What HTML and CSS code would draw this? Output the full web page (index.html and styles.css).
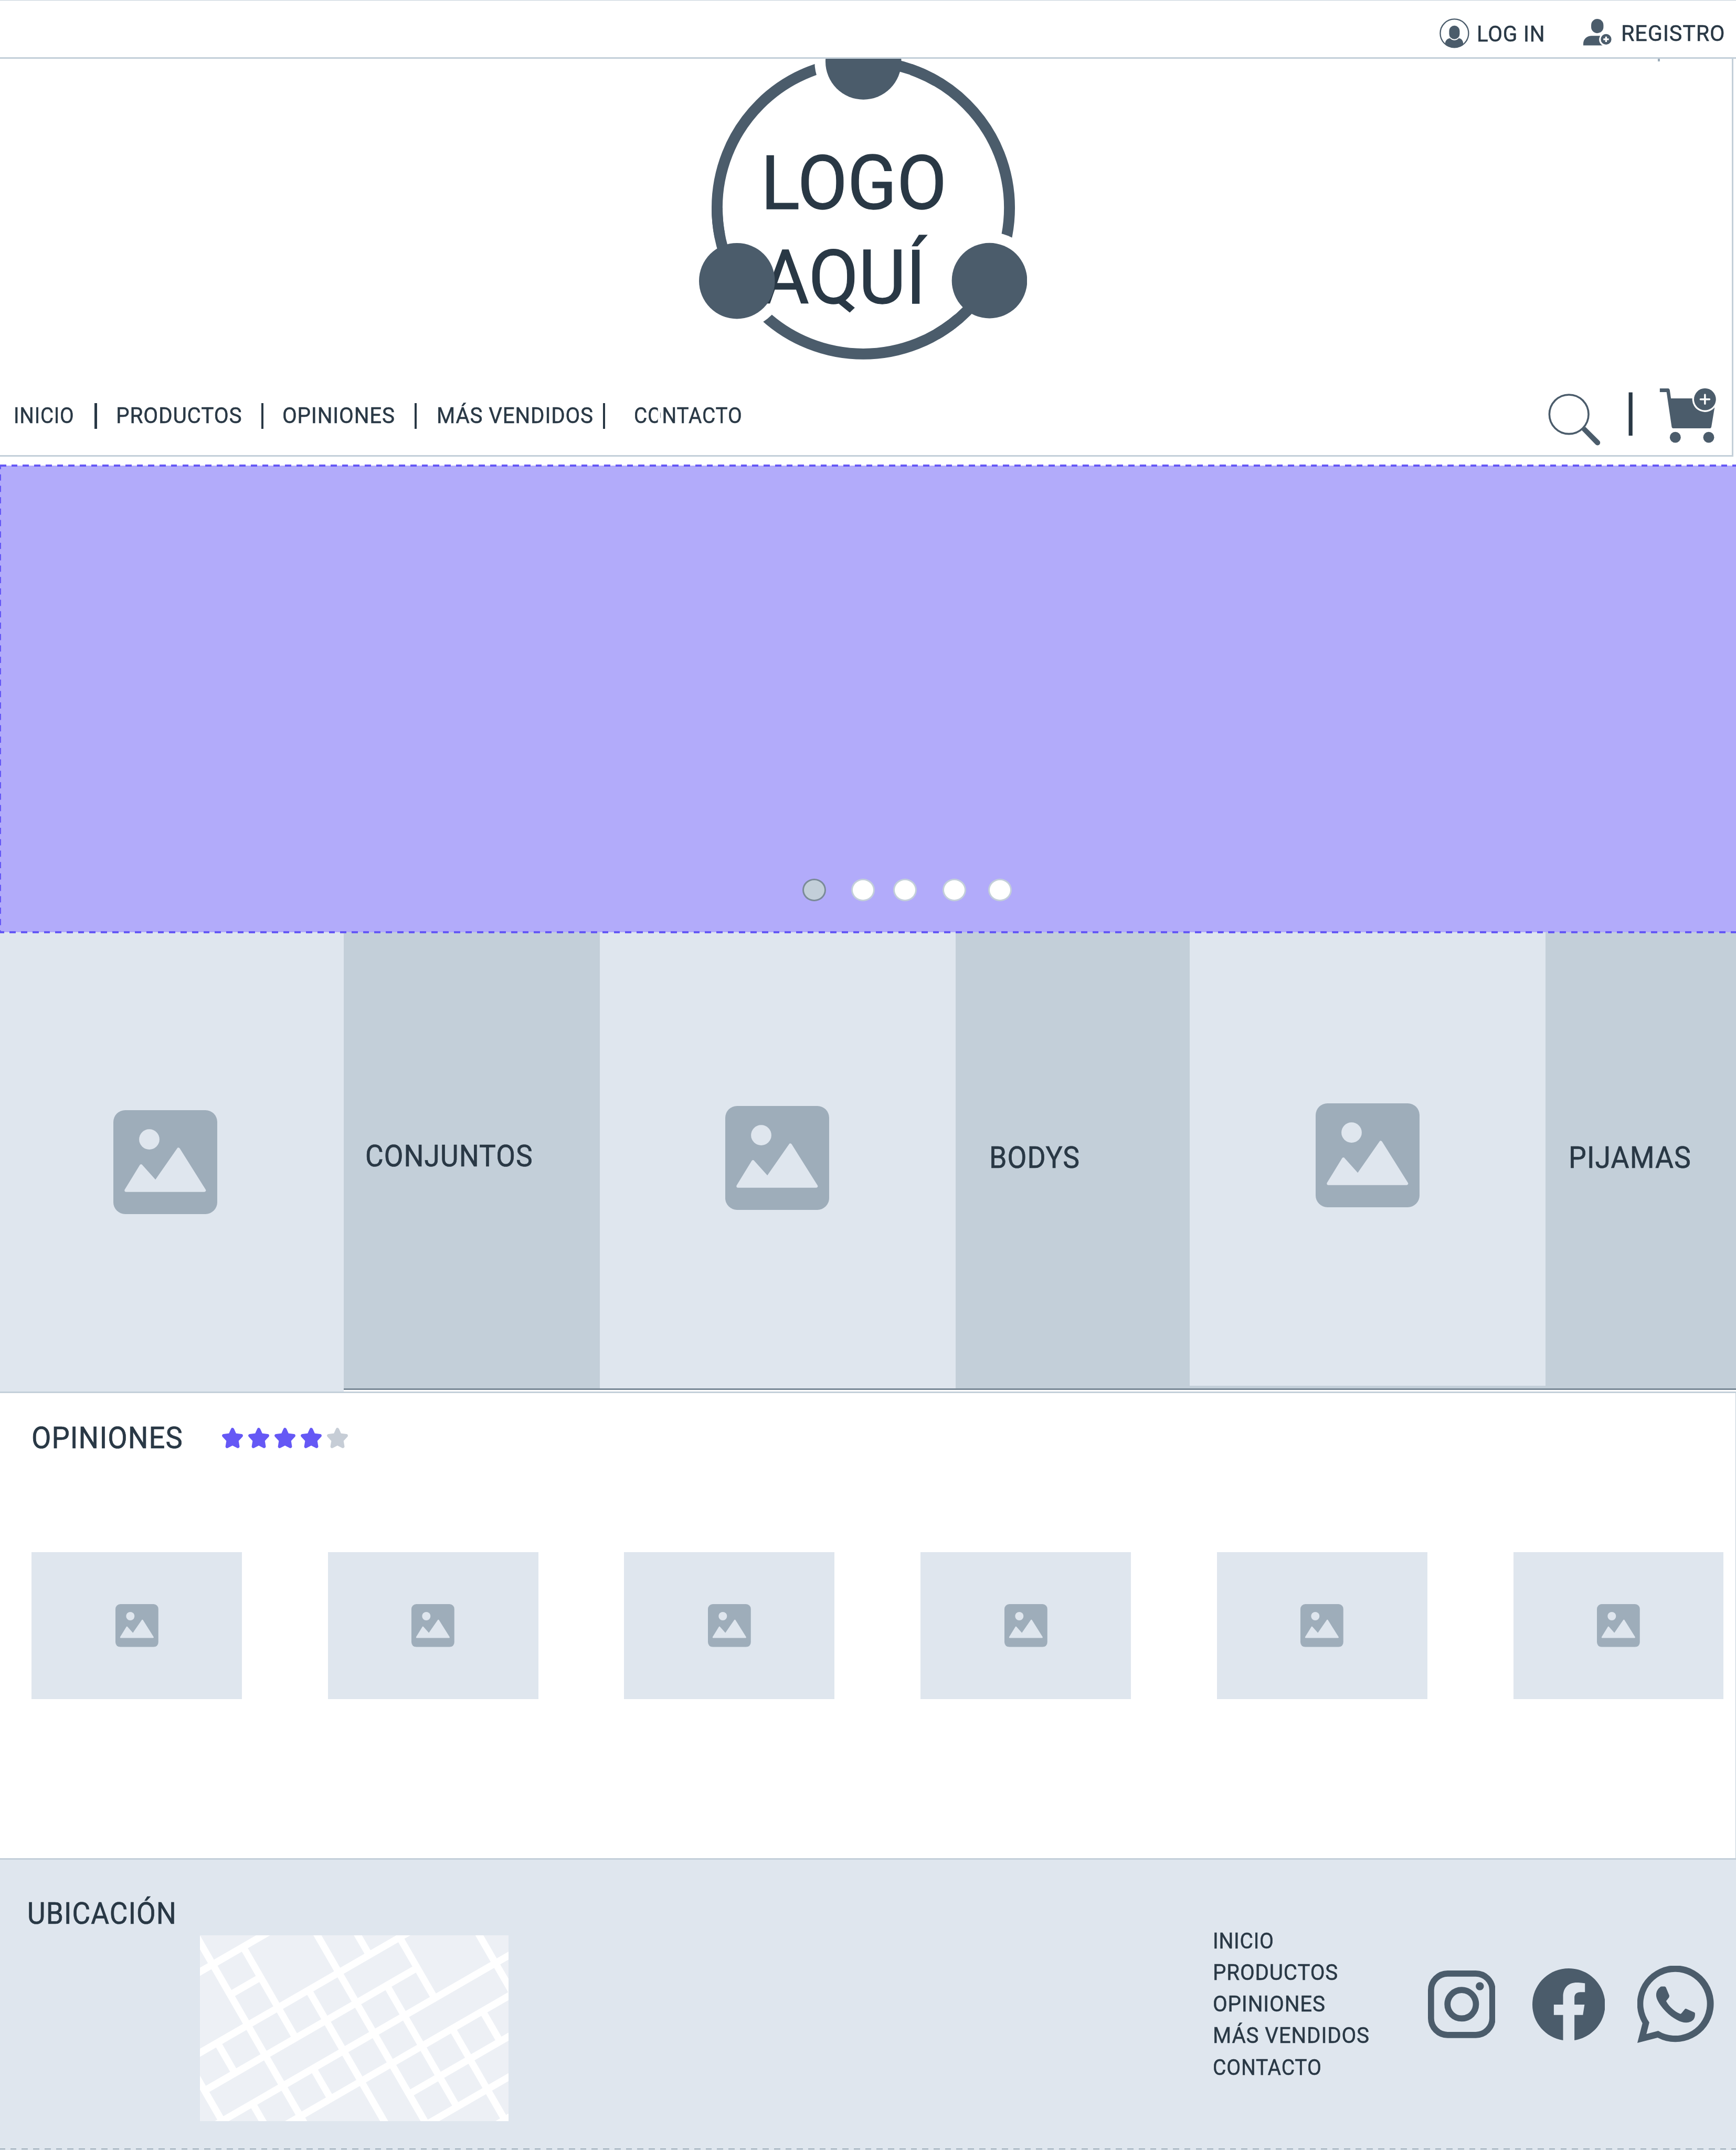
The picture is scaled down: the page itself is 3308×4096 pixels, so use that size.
FILE: index.html
```html
<!DOCTYPE html>
<html lang="es">
<head>
<meta charset="utf-8">
<title>Tienda</title>
<link rel="stylesheet" href="styles.css">
</head>
<body>
<svg class="defs" aria-hidden="true">
  <symbol id="picture" viewBox="0 0 237 237">
    <rect class="pic-frame" width="237" height="237" rx="27"/>
    <circle class="pic-shape" cx="82" cy="66.6" r="23.2"/>
    <path class="pic-shape pic-hills" d="M29 183 63.3 127 96.4 164 148.5 89 207.5 183Z"/>
  </symbol>
  <symbol id="star" viewBox="0 0 48 47">
    <path class="star-shape" d="M24 4 29.5 16.2 44 18 34 28.8 36.3 42.8 24 36.4 11.7 42.8 14 28.8 4 18 18.5 16.2Z"/>
  </symbol>
</svg>

<div class="topbar">
  <a class="account login">
    <svg class="icon-login" viewBox="0 0 68 68">
      <clipPath id="disc"><circle cx="34" cy="34" r="32.5"/></clipPath>
      <circle class="ring-thin" cx="34" cy="34" r="32.3"/>
      <path class="ink" clip-path="url(#disc)" d="M13 68V57C13 51 18 46 24 45.300C29 51.500 39 51.500 44 45.300C50 46 54 51 54 57V68Z"/>
      <rect class="ink" x="22" y="16.500" width="24" height="31" rx="12"/>
    </svg>
    <span class="label">LOG IN</span>
  </a>
  <a class="account signup">
    <svg class="icon-signup" viewBox="0 0 65 61">
      <rect class="ink" x="18" width="28" height="32.500" rx="14"/>
      <path class="ink" d="M0 60.500V57C0 45 9 38.500 19 38.500H38.500C34 47 36 56 44 60.500Z"/>
      <circle class="ink" cx="52" cy="46.500" r="12.200"/>
      <path class="plus-small" d="M52 40.300V52.700M45.800 46.500H58.200"/>
    </svg>
    <span class="label">REGISTRO</span>
  </a>
</div>

<header class="header">
  <i class="tick"></i>
  <svg class="logo" viewBox="1594 134 749 686">
    <mask id="gaps" maskUnits="userSpaceOnUse" x="1594" y="120" width="749" height="700">
      <rect x="1594" y="120" width="749" height="700" fill="#fff"/>
      <circle cx="1968.700" cy="140.500" r="111"/>
      <circle cx="2256.600" cy="640.300" r="111"/>
      <circle cx="1680.500" cy="640.300" r="111"/>
    </mask>
    <text class="logo-text" x="1735" y="476" textLength="424" lengthAdjust="spacingAndGlyphs">LOGO</text>
    <text class="logo-text" x="1737" y="692" textLength="374" lengthAdjust="spacingAndGlyphs">AQUÍ</text>
    <circle class="logo-ring" mask="url(#gaps)" cx="1968.700" cy="473.700" r="333.500"/>
    <circle class="logo-ring" cx="1968.700" cy="473.700" r="333.500" pathLength="360" stroke-dasharray="30 90" transform="rotate(30 1968.700 473.700)"/>
    <circle class="ink" cx="1969" cy="140.500" r="86.500"/>
    <circle class="ink" cx="1680.500" cy="640.600" r="86.500"/>
    <circle class="ink" cx="2256.600" cy="639.900" r="86"/>
  </svg>
  <div class="navrow">
    <nav class="menu">
      <a class="label m1">INICIO</a><i class="bar"></i>
      <a class="label m2">PRODUCTOS</a><i class="bar"></i>
      <a class="label m3">OPINIONES</a><i class="bar"></i>
      <a class="label m4">MÁS VENDIDOS</a><i class="bar"></i>
      <a class="label m5">CONTACTO</a>
    </nav>
    <svg class="tools" viewBox="3530 880 386 134">
      <circle class="lens" cx="3578.700" cy="945" r="44.700"/>
      <path class="ink" d="M3607.700 981.300 3616 973.300 3648.200 1005.500A6 6 0 0 1 3639.700 1014Z"/>
      <rect class="divider" x="3715" y="895" width="8.700" height="98.700"/>
      <path class="ink" d="M3786 886H3805Q3808 886.300 3808.700 890L3811.400 908.700H3860A29 29 0 0 0 3911 929.500L3903.700 973Q3903 977 3899.500 977H3817.500Q3813.500 977 3813 973L3801.400 894.500H3786Z"/>
      <circle class="ink" cx="3889" cy="910.700" r="25"/>
      <path class="plus-big" d="M3889 900.500V921M3878.800 910.700H3899.300"/>
      <circle class="ink" cx="3821.300" cy="997.500" r="12.500"/>
      <circle class="ink" cx="3897.500" cy="997.500" r="12.500"/>
    </svg>
  </div>
</header>

<section class="banner">
  <div class="dots">
    <i class="dot active"></i><i class="dot"></i><i class="dot"></i><i class="dot"></i><i class="dot"></i>
  </div>
</section>

<section class="categories">
  <div class="photo photo-a"><svg class="picture"><use href="#picture"/></svg></div>
  <div class="caption cap-a"><span class="title">CONJUNTOS</span></div>
  <div class="photo photo-b"><svg class="picture"><use href="#picture"/></svg></div>
  <div class="caption cap-b"><span class="title">BODYS</span></div>
  <div class="photo photo-c"><svg class="picture"><use href="#picture"/></svg></div>
  <div class="caption cap-c"><span class="title">PIJAMAS</span></div>
</section>

<section class="reviews">
  <div class="reviews-head">
    <h2 class="title">OPINIONES</h2>
    <div class="stars">
      <svg class="star"><use href="#star"/></svg>
      <svg class="star"><use href="#star"/></svg>
      <svg class="star"><use href="#star"/></svg>
      <svg class="star"><use href="#star"/></svg>
      <svg class="star off"><use href="#star"/></svg>
    </div>
  </div>
  <div class="cards">
    <div class="card"><svg><use href="#picture"/></svg></div>
    <div class="card"><svg><use href="#picture"/></svg></div>
    <div class="card"><svg><use href="#picture"/></svg></div>
    <div class="card"><svg><use href="#picture"/></svg></div>
    <div class="card"><svg><use href="#picture"/></svg></div>
    <div class="card"><svg><use href="#picture"/></svg></div>
  </div>
</section>

<footer class="footer">
  <div class="location">
    <h2 class="title">UBICACIÓN</h2>
    <svg class="map" viewBox="0 0 704 424">
      <path class="roads" transform="rotate(-30)" d="M-400 72H900M-8 152H72M-400 232H900M-168 312H392M-400 392H900M-400 472H900M232 552H900M-400 632H900M-400 712H900M-168 0V392M-88 232V312M-88 392V800M-8 -100V800M72 72V312M72 392V472M152 232V900M232 -200V900M312 -400V232M312 312V632M392 232V392M392 472V900M472 472V552M552 -400V900"/>
    </svg>
  </div>
  <nav class="links">
    <a class="label f1">INICIO</a>
    <a class="label f2">PRODUCTOS</a>
    <a class="label f3">OPINIONES</a>
    <a class="label f4">MÁS VENDIDOS</a>
    <a class="label f5">CONTACTO</a>
  </nav>
  <div class="social">
    <svg class="instagram" viewBox="0 0 154 154">
      <rect class="insta-line" x="7" y="7" width="140" height="140" rx="38"/>
      <circle class="insta-line" cx="77" cy="77" r="32.500"/>
      <circle class="ink" cx="118.300" cy="36" r="9.300"/>
    </svg>
    <svg class="facebook" viewBox="0 0.073 24 23.854" preserveAspectRatio="none">
      <path class="ink" d="M24 12.073c0-6.627-5.373-12-12-12s-12 5.373-12 12c0 5.990 4.388 10.954 10.125 11.854v-8.385H7.078v-3.470h3.047V9.430c0-3.007 1.792-4.669 4.533-4.669 1.312 0 2.686.235 2.686.235v2.953H15.830c-1.491 0-1.956.925-1.956 1.874v2.250h3.328l-.532 3.470h-2.796v8.385C19.612 23.027 24 18.062 24 12.073z"/>
    </svg>
    <svg class="whatsapp" viewBox="45 41 525 529">
      <path class="ink" fill-rule="evenodd" d="M80 434A262 262 0 1 1 184 533L45 569ZM127 429 107 508 188 486A218 218 0 1 0 127 429Z"/>
      <path class="ink" d="M212 183H232Q239 184 241 190L263 243Q265 249 261 258L242 283C262 322 300 355 338 370Q343 371 347 366L370 338Q374 333 380 336L436 361Q440 363 440 371C440 390 436 402 428 411C414 425 395 430 376 430C345 430 290 404 240 354C200 314 174 270 174 243C174 215 186 199 200 188Q205 183 212 183Z"/>
    </svg>
  </div>
</footer>
</body>
</html>
```
FILE: styles.css
```css
:root {
  font-size: 8.3535px;
  --ink: #4b5c6b;
  --text: #293845;
  --line: #c3cfd9;
  --light: #dfe6ee;
  --mid: #9eadba;
  --slate: #788896;
  --violet: #6558f5;
  --lilac: #b2abfa;
}

* { box-sizing: border-box; }

body {
  margin: 0;
  width: 396rem;
  height: 4096px;
  overflow: hidden;
  background: #fff;
  color: var(--text);
  font-family: Roboto, "Liberation Sans", sans-serif;
}

svg { display: block; flex: none; }
.defs { position: absolute; width: 0; height: 0; }
.ink { fill: var(--ink); }

/* condensed capitals: --fit narrows each label to its width */
.label, .title {
  display: block;
  margin: 0;
  font-weight: 400;
  line-height: 1;
  white-space: nowrap;
  transform: scaleX(var(--fit, .93));
  transform-origin: 0 0;
  -webkit-text-stroke: .012em var(--text);
}
.label { font-size: 5.2rem; letter-spacing: .02em; }
.title { font-size: 6.9rem; letter-spacing: .02em; }

/* top bar */
.topbar {
  display: flex;
  height: 13.4rem;
  padding-left: 328.4rem;
  border-top: .2rem solid var(--line);
  border-bottom: .4rem solid var(--line);
}
.account { display: flex; align-items: flex-start; }
.login { width: 32.8rem; }
.icon-login { width: 6.8rem; height: 6.8rem; margin: 4.1rem 1.7rem 0 0; }
.login .label { margin-top: 5rem; }
.icon-signup { width: 6.5rem; height: 6.1rem; margin: 4.15rem 2.1rem 0 0; }
.signup .label { margin-top: 4.85rem; --fit: .953; }
.ring-thin { fill: none; stroke: var(--ink); stroke-width: 2.8; }
.plus-small { stroke: #fff; stroke-width: 4; }

/* header */
.header {
  position: relative;
  width: 395.4rem;
  height: 90.8rem;
  border-right: .4rem solid var(--line);
  border-bottom: .4rem solid var(--line);
}
.tick {
  position: absolute;
  top: 0;
  left: 378.2rem;
  width: .4rem;
  height: .6rem;
  background: var(--mid);
}
.logo { width: 74.9rem; height: 68.6rem; margin-left: 159.4rem; }
.logo-text { font-size: 172px; fill: var(--text); stroke: var(--text); stroke-width: 1.5; }
.logo-ring { fill: none; stroke: var(--ink); stroke-width: 25; }
.navrow { display: flex; justify-content: space-between; padding: 6rem 3.4rem 0 3.1rem; }
.menu {
  display: grid;
  grid-template-columns: 18.5rem 4.8rem 33.2rem 4.8rem 30.2rem 5rem 37.95rem 7.1rem 25.9rem;
  align-items: start;
  padding-top: 3.9rem;
}
.menu .label { margin-top: .3rem; }
.bar { width: .5rem; height: 5.9rem; background: var(--text); }
.m1 { --fit: .89; }
.m2 { --fit: .935; }
.m5 { position: relative; --fit: .895; }
.m5::after {
  content: "";
  position: absolute;
  top: 0;
  left: 6.1rem;
  width: .6rem;
  height: 100%;
  background: #fff;
}
.tools { width: 38.6rem; height: 13.4rem; overflow: visible; }
.lens { fill: none; stroke: var(--ink); stroke-width: 4.3; }
.divider { fill: var(--text); }
.plus-big { stroke: #fff; stroke-width: 4.2; stroke-linecap: round; }

/* banner */
.banner {
  position: relative;
  height: 106.4rem;
  margin-top: 2rem;
  padding: 94.2rem 0 0 183rem;
  background: var(--lilac);
}
.banner::before, .banner::after {
  content: "";
  position: absolute;
  left: 0;
  right: 0;
  height: .4rem;
  background: repeating-linear-gradient(90deg, var(--violet) 0 1.4rem, transparent 1.4rem 2.6rem);
}
.banner::before { top: -.2rem; }
.banner::after { bottom: -.2rem; background-position-x: -.4rem; background-size: 400.400rem 100%; z-index: 1; }
.dots { display: flex; }
.dots::before {
  content: "";
  position: absolute;
  left: 0;
  top: 0;
  bottom: 0;
  width: .24rem;
  background: linear-gradient(180deg, var(--violet) 0 1.4rem, transparent 1.4rem) 0 -.6rem / 100% 2.6rem;
}
.dot {
  width: 5.4rem;
  height: 5.2rem;
  margin-right: 5.8rem;
  border: .4rem solid var(--line);
  border-radius: 50%;
  background: #fff;
}
.dot:nth-child(2) { margin-right: 4.2rem; }
.dot:nth-child(4) { margin-right: 5rem; }
.dot.active { background: var(--line); border-color: #7b8b98; }

/* categories */
.categories {
  display: grid;
  grid-template-columns: 78.4rem 58.4rem 81.2rem 53.4rem 81.2rem 43.4rem;
  align-items: start;
  height: 104.8rem;
}
.photo, .caption { height: 104.4rem; border-bottom: .4rem solid var(--slate); }
.photo { background: var(--light); }
.caption { background: var(--line); }
.photo-a { height: 104.8rem; border: 0; padding: 40.6rem 0 0 25.9rem; }
.photo-b { padding: 39.6rem 0 0 28.7rem; }
.photo-c { padding: 39rem 0 0 28.7rem; box-shadow: inset 0 -.6rem var(--line); }
.picture { width: 23.7rem; height: 23.7rem; }
.pic-frame { fill: var(--mid); }
.pic-shape { fill: var(--light); }
.pic-hills { stroke: var(--light); stroke-width: 7; stroke-linejoin: round; }
.cap-a { padding: 47.600rem 0 0 4.900rem; }
.cap-a .title { --fit: .925; }
.cap-b { padding: 48rem 0 0 7.650rem; }
.cap-c { padding: 48rem 0 0 5.200rem; }

/* reviews */
.reviews {
  height: 106.4rem;
  padding: 6.8rem 0 0 7.2rem;
  border-top: .4rem solid var(--line);
  border-right: .2rem solid var(--line);
}
.reviews-head { display: flex; height: 29.4rem; }
.reviews-head .title { width: 43.4rem; --fit: .942; }
.stars { display: flex; gap: 1.2rem; padding-top: 1.1rem; }
.star { width: 4.8rem; height: 4.7rem; fill: var(--violet); stroke: var(--violet); }
.star.off { fill: #c6cdd6; stroke: #c6cdd6; }
.star-shape { stroke-width: 7.5; stroke-linejoin: round; }
.cards { display: grid; grid-template-columns: repeat(6, 48rem); gap: 19.6rem; }
.card { display: grid; place-items: center; height: 33.6rem; background: var(--light); }
.card svg { width: 9.8rem; height: 9.8rem; }

/* footer */
.footer {
  position: relative;
  display: flex;
  height: 66.6rem;
  background: var(--light);
  border-top: .4rem solid var(--line);
}
.footer::after {
  content: "";
  position: absolute;
  left: -.2rem;
  right: 0;
  bottom: .2rem;
  height: .2rem;
  background: repeating-linear-gradient(90deg, var(--mid) 0 1.4rem, transparent 1.4rem 2.6rem);
}
.location { width: 276.6rem; padding: 8.9rem 0 0 6.2rem; }
.location .title { --fit: .925; }
.map { width: 70.4rem; height: 42.4rem; margin: 1.4rem 0 0 39.4rem; background: #edf0f5; }
.roads { fill: none; stroke: #fff; stroke-width: 16; }
.links { display: flex; flex-direction: column; gap: 2rem; width: 49.1rem; padding-top: 15.9rem; }
.f1, .f5 { --fit: .9; }
.social { display: flex; align-items: flex-start; padding-top: 24.2rem; }
.instagram { width: 15.4rem; height: 15.4rem; margin-top: 1.1rem; }
.facebook { width: 16.6rem; height: 16.4rem; margin: .6rem 7.4rem 0 8.4rem; }
.whatsapp { width: 17.5rem; height: 17.63rem; }
.insta-line { fill: none; stroke: var(--ink); stroke-width: 14; }
```
